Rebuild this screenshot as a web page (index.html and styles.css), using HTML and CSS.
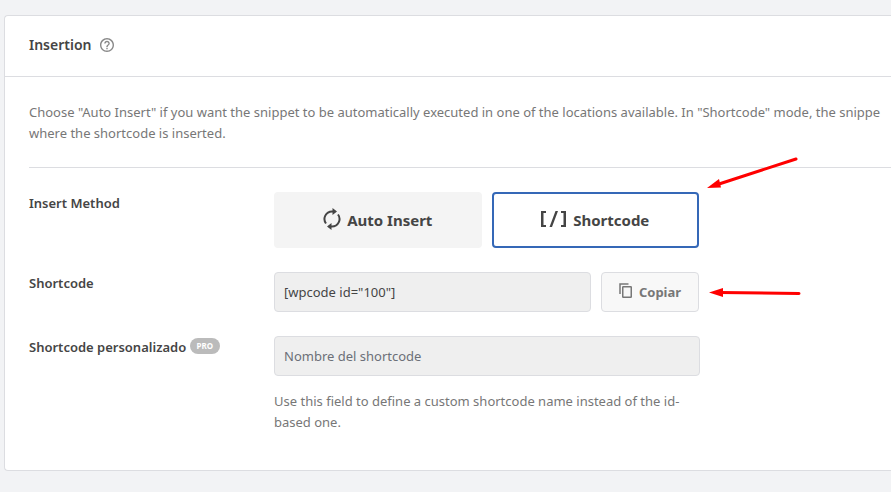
FILE: index.html
```html
<!DOCTYPE html>
<html lang="es">
<head>
<meta charset="utf-8">
<meta name="viewport" content="width=device-width, initial-scale=1">
<title>Insertion</title>
<link rel="stylesheet" href="styles.css">
</head>
<body>
<section class="card">
  <header class="card-header">
    <h2>Insertion</h2>
    <svg class="help-icon" width="14" height="14" viewBox="0 0 20 20" aria-hidden="true"><path fill="currentColor" d="M9 16h2v-2H9v2zm1-16C4.480 0 0 4.480 0 10s4.480 10 10 10 10-4.480 10-10S15.520 0 10 0zm0 18c-4.410 0-8-3.590-8-8s3.590-8 8-8 8 3.590 8 8-3.590 8-8 8zm0-14C7.790 4 6 5.790 6 8h2c0-1.100.9-2 2-2s2 .9 2 2c0 2-3 1.750-3 5h2c0-2.250 3-2.500 3-5 0-2.210-1.790-4-4-4z"/></svg>
  </header>
  <div class="card-body">
    <p class="intro">Choose "Auto Insert" if you want the snippet to be automatically executed in one of the locations available. In "Shortcode" mode, the snippe<br>where the shortcode is inserted.</p>
    <hr>
    <div class="row">
      <div class="label" id="method-label">Insert Method</div>
      <div class="field methods" role="group" aria-labelledby="method-label">
        <button class="method" type="button" aria-pressed="false">
          <svg width="18" height="24" viewBox="0 0 18 24" aria-hidden="true"><g fill="none" stroke="currentColor" stroke-width="2"><path d="M3 15.500A7.500 7.500 0 0 1 9 3.500h2M15 6.500A7.500 7.500 0 0 1 9 18.500H7"/></g><path fill="currentColor" d="M9.500 0 14 3.500 9.500 7zM8.500 15 4 18.500 8.500 22z"/></svg>
          Auto Insert
        </button>
        <button class="method selected" type="button" aria-pressed="true">
          <svg width="26" height="18" viewBox="0 0 26 18" aria-hidden="true"><path fill="currentColor" d="M0 0h5v2H2.500v12H5v2H0zM14.500 0H17l-6 16H8.500zM20 0h5v16h-5v-2h2.500V2H20z"/></svg>
          Shortcode
        </button>
        <svg class="arrow" width="94" height="36" viewBox="0 0 94 36" aria-hidden="true"><path d="M89 4 12 29" stroke="#f00" stroke-width="3" stroke-linecap="round"/><path fill="#f00" d="M0 33 12 24 14 32.500z"/></svg>
      </div>
    </div>
    <div class="row">
      <label class="label" for="shortcode">Shortcode</label>
      <div class="field copy">
        <input id="shortcode" type="text" value='[wpcode id="100"]' readonly>
        <button class="copy-button" type="button">
          <svg width="14" height="18" viewBox="0 0 14 18" aria-hidden="true"><g fill="none" stroke="currentColor" stroke-width="1.500"><path d="M1 11V1h8.500"/><rect x="3.750" y="3.750" width="8.500" height="10.500" rx=".5"/></g></svg>
          Copiar
        </button>
        <svg class="arrow" width="94" height="12" viewBox="0 0 94 12" aria-hidden="true"><path d="M13 5.500 92 6.500" stroke="#f00" stroke-width="3" stroke-linecap="round"/><path fill="#f00" d="M2 5.500 16 1v9z"/></svg>
      </div>
    </div>
    <div class="row">
      <label class="label" for="custom">Shortcode personalizado <span class="badge">PRO</span></label>
      <div class="field">
        <input id="custom" type="text" placeholder="Nombre del shortcode" readonly>
        <p class="hint">Use this field to define a custom shortcode name instead of the id-<wbr>based one.</p>
      </div>
    </div>
  </div>
</section>
</body>
</html>
```
FILE: styles.css
```css
* {
  box-sizing: border-box;
}

body {
  margin: 0;
  padding: 15px 0 20px 4px;
  background: #f2f3f5;
  color: #454545;
  font: 13px/21px "Noto Sans", "Open Sans", sans-serif;
}

button,
input {
  font: inherit;
}

.card {
  overflow: hidden;
  background: #fff;
  border: 1px solid #dcdde1;
  border-right: 0;
  border-radius: 4px 0 0 4px;
}

.card-header {
  display: flex;
  align-items: center;
  gap: 8px;
  height: 61px;
  padding: 0 24px 3px;
  border-bottom: 1px solid #dcdde1;
}

h2 {
  margin: 0;
  font-size: 14px;
  font-weight: 600;
}

.help-icon {
  color: #8a8a8a;
}

.card-body {
  padding: 25px 0 37px 24px;
}

p {
  margin: 0;
  color: #777;
}

.intro {
  white-space: nowrap;
}

hr {
  height: 1px;
  margin: 23px 0 24px;
  border: 0;
  background: #dcdde1;
}

.row {
  display: flex;
  margin-bottom: 24px;
}

.row:last-child {
  margin-bottom: 0;
}

.label {
  flex: 0 0 245px;
  padding-top: 1px;
  font-weight: 600;
}

.badge {
  display: inline-block;
  padding: 0 7px;
  border-radius: 8px;
  background: #bbb;
  color: #fff;
  font-size: 8px;
  font-weight: 700;
  line-height: 16px;
  vertical-align: 3px;
}

.field {
  position: relative;
  flex: 0 1 426px;
}

.methods,
.copy {
  display: flex;
  flex-basis: 425px;
  gap: 10px;
}

.method {
  display: flex;
  flex: 1;
  align-items: center;
  justify-content: center;
  gap: 6px;
  height: 56px;
  border: 2px solid #f4f4f4;
  border-radius: 4px;
  background: #f4f4f4;
  color: #454545;
  font-size: 15px;
  font-weight: 700;
}

.selected {
  border-color: #3568b7;
  background: #fff;
}

input {
  display: block;
  flex: 1;
  width: 100%;
  min-width: 0;
  height: 40px;
  padding: 0 9px;
  border: 1px solid #dcdde1;
  border-radius: 4px;
  background: #efefef;
  color: #454545;
}

input::placeholder {
  color: #6c7078;
  opacity: 1;
}

.copy-button {
  display: flex;
  flex: 0 0 98px;
  align-items: center;
  justify-content: center;
  gap: 6px;
  height: 40px;
  padding: 0;
  border: 1px solid #dcdde1;
  border-radius: 4px;
  background: #f8f8f8;
  color: #777;
  font-weight: 700;
}

.hint {
  margin-top: 15px;
}

.arrow {
  position: absolute;
  left: calc(100% + 8px);
}

.methods .arrow {
  top: -37px;
}

.copy .arrow {
  top: 15px;
}
```
